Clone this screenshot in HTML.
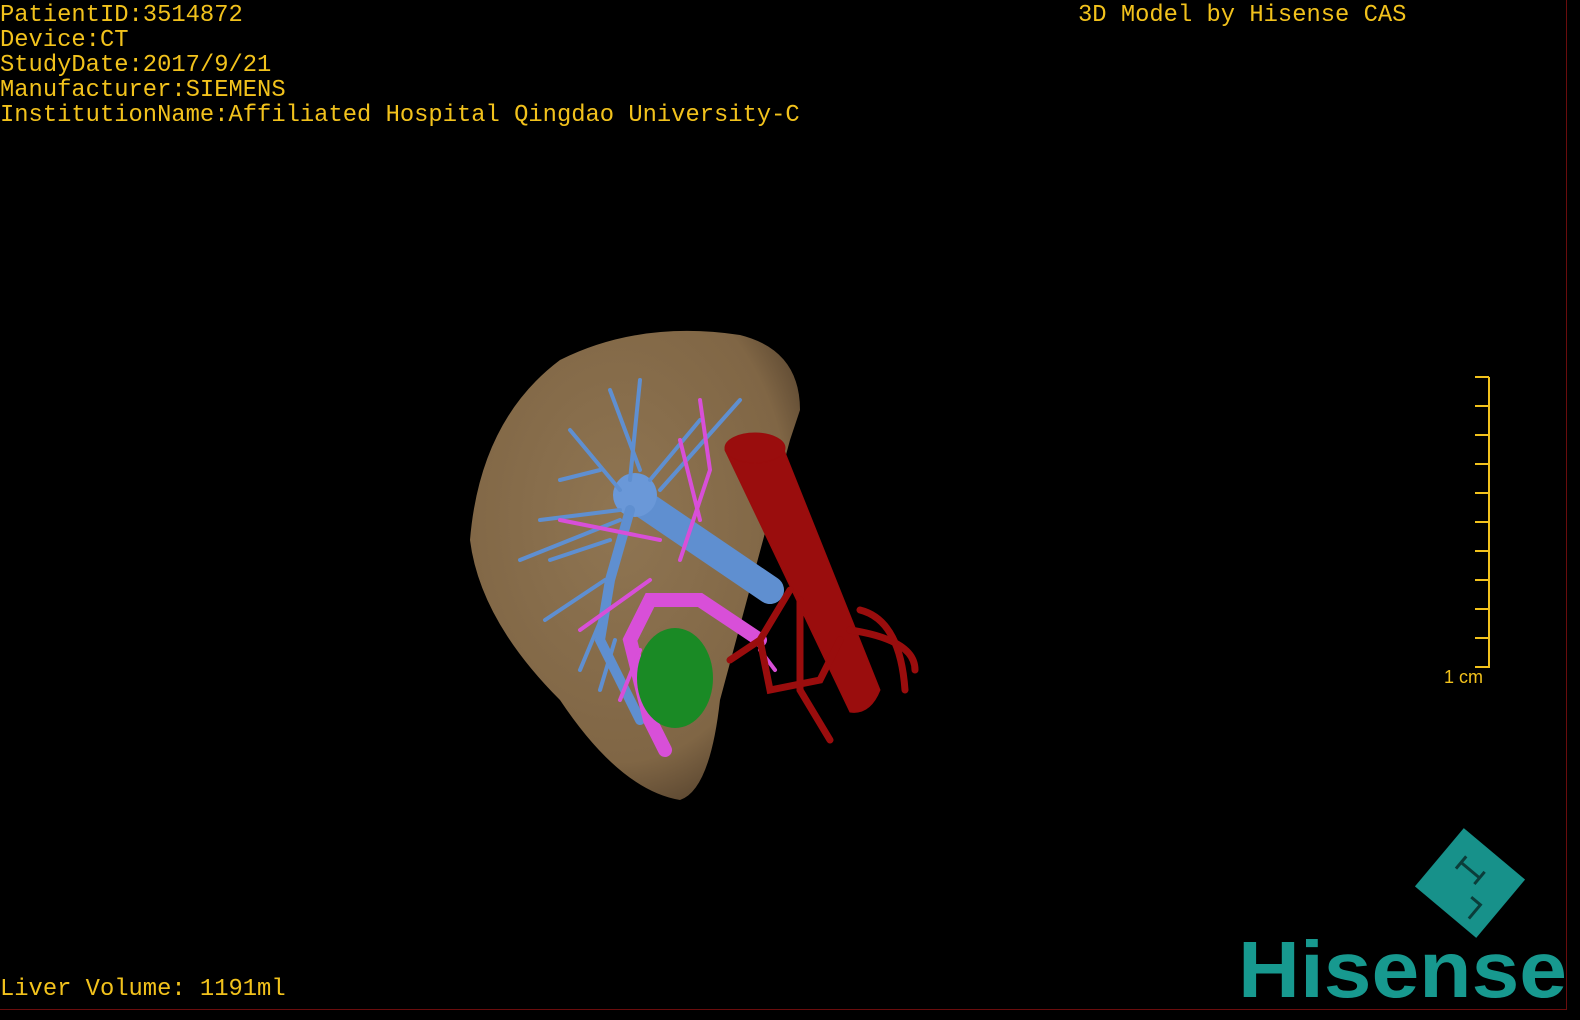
<!DOCTYPE html>
<html><head><meta charset="utf-8"><style>
html,body{margin:0;padding:0;background:#000;width:1580px;height:1020px;overflow:hidden}
.frame{position:absolute;left:0;top:0;width:1566px;height:1009px;border:1px solid #6a0d0d;border-top:none;border-left:none}
.t{position:absolute;font-family:"Liberation Mono",monospace;font-size:23.8px;color:#f2c21c;white-space:pre;line-height:25px}
</style></head><body>
<div class="frame"></div>
<div class="t" style="left:0;top:3px">PatientID:3514872
Device:CT
StudyDate:2017/9/21
Manufacturer:SIEMENS
InstitutionName:Affiliated Hospital Qingdao University-C</div>
<div class="t" style="left:1078px;top:3px">3D Model by Hisense CAS</div>
<div class="t" style="left:0;top:977px">Liver Volume: 1191ml</div>
<svg width="1580" height="1020" style="position:absolute;left:0;top:0">
<defs><radialGradient id="lg" cx="0.45" cy="0.4" r="0.65"><stop offset="0" stop-color="#8f7552"/><stop offset="0.8" stop-color="#806645"/><stop offset="1" stop-color="#5a4630"/></radialGradient></defs>
<g stroke="#f2c21c" stroke-width="2">
<line x1="1489" y1="377" x2="1489" y2="668"/>
<line x1="1475" y1="377" x2="1489" y2="377"/><line x1="1475" y1="406" x2="1489" y2="406"/>
<line x1="1475" y1="435" x2="1489" y2="435"/><line x1="1475" y1="464" x2="1489" y2="464"/>
<line x1="1475" y1="493" x2="1489" y2="493"/><line x1="1475" y1="522" x2="1489" y2="522"/>
<line x1="1475" y1="551" x2="1489" y2="551"/><line x1="1475" y1="580" x2="1489" y2="580"/>
<line x1="1475" y1="609" x2="1489" y2="609"/><line x1="1475" y1="638" x2="1489" y2="638"/>
<line x1="1475" y1="667" x2="1489" y2="667"/>
</g>
<text x="1444" y="683" fill="#f2c21c" font-family="Liberation Sans,sans-serif" font-size="18">1 cm</text>
<path d="M560 360 Q640 320 740 335 Q800 350 800 410 L790 440 L720 700 Q710 790 680 800 Q620 790 560 700 Q480 620 470 540 Q480 420 560 360Z" fill="url(#lg)"/>
<g stroke="#5f8fd0" fill="none" stroke-linecap="round">
<path d="M630 495 L770 590" stroke-width="28"/>
<circle cx="635" cy="495" r="22" fill="#6a98d8" stroke="none"/>
<path d="M630 510 L610 580 L600 640 L640 720" stroke-width="10"/>
<g stroke-width="4">
<path d="M620 490 L570 430 M630 480 L640 380 M650 480 L700 420 M640 470 L610 390 M620 510 L540 520 M610 540 L550 560 M605 580 L545 620 M605 610 L580 670 M615 640 L600 690 M660 490 L740 400 M600 470 L560 480 M620 520 L520 560"/>
</g>
</g>
<g stroke="#d84fd8" fill="none" stroke-linecap="round">
<path d="M760 640 L700 600 L650 600 L630 640 L650 720 L665 750" stroke-width="14"/>
<g stroke-width="4"><path d="M680 560 L710 470 L700 400 M660 540 L560 520 M650 580 L580 630 M700 520 L680 440 M640 650 L620 700 M760 650 L775 670"/></g>
</g>
<ellipse cx="675" cy="678" rx="38" ry="50" fill="#1a8a25"/>
<g fill="#9a0d0d" stroke="#9a0d0d" stroke-linecap="round">
<path d="M725 450 Q750 430 780 440 L880 690 Q870 715 850 712 Z"/>
<ellipse cx="755" cy="448" rx="30" ry="15"/>
<g fill="none" stroke-width="7"><path d="M790 590 L760 640 L770 690 L820 680 L840 640 M800 600 L800 690 L830 740 M860 610 Q900 620 905 690 M850 630 Q915 640 915 670 M760 640 L730 660"/></g>
</g>
<g transform="translate(1470,883) rotate(40)">
<rect x="-40" y="-38" width="80" height="76" fill="#17918a"/>
<path d="M-20 -18 L-20 -2 M-20 -10 L4 -10 M4 -18 L4 -2 M10 10 L22 10 L22 28" stroke="#0b3d3a" stroke-width="3" fill="none"/>
</g>
<text x="1238" y="997" fill="#17998f" font-family="Liberation Sans,sans-serif" font-weight="bold" font-size="80" textLength="329" lengthAdjust="spacingAndGlyphs">Hisense</text>
</svg>
</body></html>
